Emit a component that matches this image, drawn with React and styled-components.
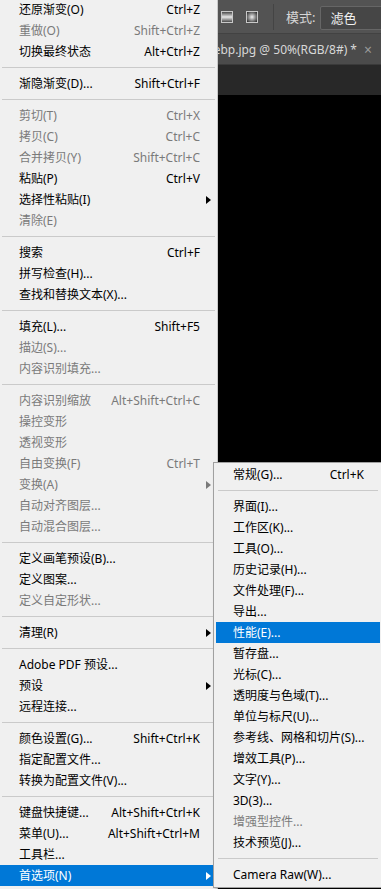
import styled, { createGlobalStyle } from 'styled-components';

const GlobalStyle = createGlobalStyle`
  html, body {
    margin: 0;
    padding: 0;
    background: #282828;
    overflow: hidden;
  }
  * {
    box-sizing: border-box;
  }
`;

const editMenu = [
  [
    { label: '还原渐变(O)', shortcut: 'Ctrl+Z' },
    { label: '重做(O)', shortcut: 'Shift+Ctrl+Z', disabled: true },
    { label: '切换最终状态', shortcut: 'Alt+Ctrl+Z' },
  ],
  [{ label: '渐隐渐变(D)...', shortcut: 'Shift+Ctrl+F' }],
  [
    { label: '剪切(T)', shortcut: 'Ctrl+X', disabled: true },
    { label: '拷贝(C)', shortcut: 'Ctrl+C', disabled: true },
    { label: '合并拷贝(Y)', shortcut: 'Shift+Ctrl+C', disabled: true },
    { label: '粘贴(P)', shortcut: 'Ctrl+V' },
    { label: '选择性粘贴(I)', sub: true },
    { label: '清除(E)', disabled: true },
  ],
  [
    { label: '搜索', shortcut: 'Ctrl+F' },
    { label: '拼写检查(H)...' },
    { label: '查找和替换文本(X)...' },
  ],
  [
    { label: '填充(L)...', shortcut: 'Shift+F5' },
    { label: '描边(S)...', disabled: true },
    { label: '内容识别填充...', disabled: true },
  ],
  [
    { label: '内容识别缩放', shortcut: 'Alt+Shift+Ctrl+C', disabled: true },
    { label: '操控变形', disabled: true },
    { label: '透视变形', disabled: true },
    { label: '自由变换(F)', shortcut: 'Ctrl+T', disabled: true },
    { label: '变换(A)', disabled: true, sub: true },
    { label: '自动对齐图层...', disabled: true },
    { label: '自动混合图层...', disabled: true },
  ],
  [
    { label: '定义画笔预设(B)...' },
    { label: '定义图案...' },
    { label: '定义自定形状...', disabled: true },
  ],
  [{ label: '清理(R)', sub: true }],
  [
    { label: 'Adobe PDF 预设...' },
    { label: '预设', sub: true },
    { label: '远程连接...' },
  ],
  [
    { label: '颜色设置(G)...', shortcut: 'Shift+Ctrl+K' },
    { label: '指定配置文件...' },
    { label: '转换为配置文件(V)...' },
  ],
  [
    { label: '键盘快捷键...', shortcut: 'Alt+Shift+Ctrl+K' },
    { label: '菜单(U)...', shortcut: 'Alt+Shift+Ctrl+M' },
    { label: '工具栏...' },
    { label: '首选项(N)', sub: true, active: true },
  ],
];

const prefsMenu = [
  [{ label: '常规(G)...', shortcut: 'Ctrl+K' }],
  [
    { label: '界面(I)...' },
    { label: '工作区(K)...' },
    { label: '工具(O)...' },
    { label: '历史记录(H)...' },
    { label: '文件处理(F)...' },
    { label: '导出...' },
    { label: '性能(E)...', active: true },
    { label: '暂存盘...' },
    { label: '光标(C)...' },
    { label: '透明度与色域(T)...' },
    { label: '单位与标尺(U)...' },
    { label: '参考线、网格和切片(S)...' },
    { label: '增效工具(P)...' },
    { label: '文字(Y)...' },
    { label: '3D(3)...' },
    { label: '增强型控件...', disabled: true },
    { label: '技术预览(J)...' },
  ],
  [{ label: 'Camera Raw(W)...' }],
];

function MenuItems({ groups, Row }) {
  return groups.map((group, gi) => (
    <div key={gi}>
      {gi > 0 && <Separator />}
      {group.map((item) => (
        <Row key={item.label} $disabled={item.disabled} $active={item.active}>
          <span>{item.label}</span>
          <Shortcut>{item.shortcut}</Shortcut>
          <ArrowCell>{item.sub && <Arrow />}</ArrowCell>
        </Row>
      ))}
    </div>
  ));
}

export default function App() {
  return (
    <>
      <GlobalStyle />
      <Screen>
        <Menu>
          <MenuItems groups={editMenu} Row={Row} />
        </Menu>
        <Workspace>
          <Toolbar>
            <ToolIcon viewBox="0 0 12 12">
              <defs>
                <linearGradient id="refl" x1="0" y1="0" x2="0" y2="1">
                  <stop offset="0" stopColor="#3a3a3a" />
                  <stop offset="0.5" stopColor="#e8e8e8" />
                  <stop offset="1" stopColor="#3a3a3a" />
                </linearGradient>
              </defs>
              <rect x="0.5" y="0.5" width="11" height="11" fill="url(#refl)" stroke="#c8c8c8" />
            </ToolIcon>
            <ToolIcon viewBox="0 0 12 12">
              <defs>
                <radialGradient id="rad" cx="0.5" cy="0.5" r="0.6">
                  <stop offset="0" stopColor="#f0f0f0" />
                  <stop offset="1" stopColor="#2e2e2e" />
                </radialGradient>
              </defs>
              <rect x="0.5" y="0.5" width="11" height="11" fill="url(#rad)" stroke="#c8c8c8" />
            </ToolIcon>
            <ToolDivider />
            <ModeLabel>模式:</ModeLabel>
            <ModeSelect>滤色</ModeSelect>
          </Toolbar>
          <TabBar>
            <TabTitle>webp.jpg @ 50%(RGB/8#) *</TabTitle>
            <TabClose>×</TabClose>
          </TabBar>
          <Canvas>
            <Document />
          </Canvas>
        </Workspace>
        <SubMenu>
          <MenuItems groups={prefsMenu} Row={SubRow} />
        </SubMenu>
      </Screen>
    </>
  );
}

const Screen = styled.div`
  position: relative;
  width: 381px;
  height: 889px;
  overflow: hidden;
  display: grid;
  grid-template-columns: 218px 1fr;
  font-family: "Noto Sans", "Noto Sans CJK SC", sans-serif;
  font-size: 12px;
`;

const Menu = styled.div`
  background: #f0f0f0;
  border-right: 1px solid #c9c9c9;
  margin-top: -1px;
  z-index: 1;
`;

const Separator = styled.div`
  height: 11px;
  padding: 5px 2px 0;
  &::after {
    content: '';
    display: block;
    border-top: 1px solid #cacaca;
  }
`;

const Row = styled.div`
  display: grid;
  grid-template-columns: 1fr auto 17px;
  align-items: center;
  height: 21px;
  line-height: 21px;
  padding-left: 19px;
  white-space: nowrap;
  color: ${(p) => (p.$active ? '#ffffff' : p.$disabled ? '#7a7a7a' : '#000000')};
  background: ${(p) => (p.$active ? '#0078d7' : 'transparent')};
`;

const SubRow = styled(Row)`
  grid-template-columns: 1fr auto 16px;
  padding-left: 17px;
`;

const Shortcut = styled.span`
  text-align: right;
`;

const ArrowCell = styled.span`
  display: flex;
  justify-content: center;
  align-items: center;
`;

const Arrow = styled.span`
  width: 0;
  height: 0;
  border-top: 4px solid transparent;
  border-bottom: 4px solid transparent;
  border-left: 5px solid currentColor;
`;

const Workspace = styled.div`
  display: flex;
  flex-direction: column;
  min-width: 0;
  overflow: hidden;
`;

const Toolbar = styled.div`
  height: 34px;
  flex-shrink: 0;
  display: flex;
  align-items: center;
  background: #535353;
  border-bottom: 1px solid #424242;
  padding-left: 3px;
`;

const ToolIcon = styled.svg`
  width: 12px;
  height: 12px;
  margin-right: 13px;
  flex-shrink: 0;
`;

const ToolDivider = styled.div`
  width: 1px;
  height: 26px;
  background: #444444;
  margin: 0 12px 0 2px;
  flex-shrink: 0;
`;

const ModeLabel = styled.span`
  color: #d6d6d6;
  font-size: 13px;
  margin-right: 5px;
  flex-shrink: 0;
`;

const ModeSelect = styled.div`
  flex-shrink: 0;
  width: 80px;
  height: 24px;
  line-height: 22px;
  padding-left: 9px;
  margin-top: 2px;
  background: #464646;
  border: 1px solid #666666;
  border-radius: 2px;
  color: #f2f2f2;
  font-size: 13px;
`;

const TabBar = styled.div`
  height: 31px;
  flex-shrink: 0;
  display: flex;
  align-items: center;
  justify-content: flex-end;
  gap: 7px;
  padding-right: 9px;
  background: #4b4b4b;
  border-bottom: 1px solid #3a3a3a;
  white-space: nowrap;
  color: #d8d8d8;
`;

const TabTitle = styled.span`
  flex-shrink: 0;
  font-size: 12px;
`;

const TabClose = styled.span`
  flex-shrink: 0;
  color: #9a9a9a;
  font-size: 14px;
`;

const Canvas = styled.div`
  flex: 1;
  background: #282828;
  padding-top: 30px;
`;

const Document = styled.div`
  height: 100%;
  background: #000000;
`;

const SubMenu = styled.div`
  position: absolute;
  left: 213px;
  top: 462px;
  width: 170px;
  padding: 1px 2px 2px 2px;
  background: #f0f0f0;
  border: 1px solid #a0a0a0;
  box-shadow: 2px 2px 3px rgba(0, 0, 0, 0.25);
  z-index: 2;
`;
